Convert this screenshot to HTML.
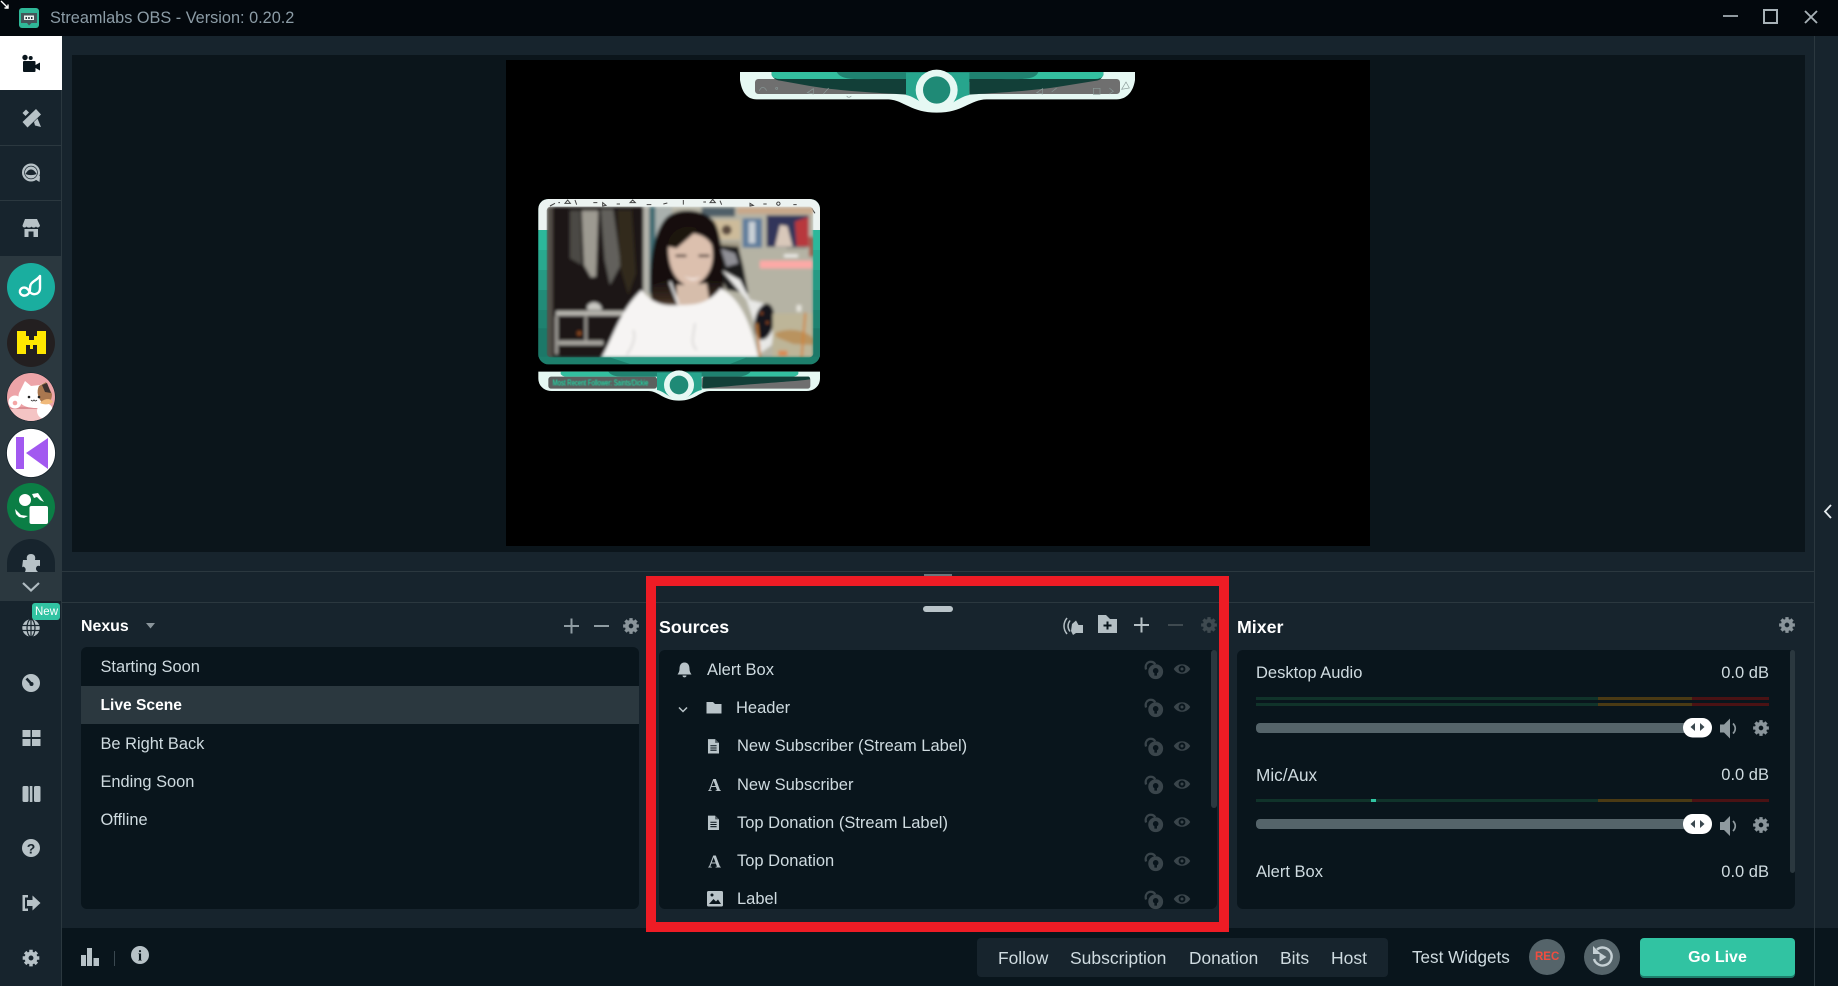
<!DOCTYPE html>
<html lang="en"><head><meta charset="utf-8"><title>Streamlabs OBS</title>
<style>
html,body{margin:0;padding:0;background:#17242d;width:1838px;height:986px;overflow:hidden}
body{position:relative;font-family:"Liberation Sans",Arial,sans-serif;color:#cfdbe0}
.b{position:absolute}
.t{position:absolute;height:20px;line-height:20px;white-space:nowrap;font-size:16.5px}
.h{font-weight:700;color:#fff}
svg.o{position:absolute;left:0;top:0}
</style></head><body>

<div class="b" style="left:0;top:0;width:1838px;height:36px;background:#03080d"></div>
<div class="b" style="left:0;top:36px;width:61px;height:950px;background:#17242d"></div>
<div class="b" style="left:61px;top:36px;width:1px;height:950px;background:#2b383f"></div>
<div class="b" style="left:0;top:36px;width:62px;height:54px;background:#fff"></div>
<div class="b" style="left:0;top:145px;width:61px;height:1px;background:#2b383f"></div>
<div class="b" style="left:0;top:200px;width:61px;height:1px;background:#2b383f"></div>
<div class="b" style="left:0;top:256px;width:61px;height:345px;background:#2b383f"></div>

<div class="b" style="left:72px;top:55px;width:1733px;height:497px;background:#0b151b"></div>
<div class="b" style="left:506px;top:60px;width:864px;height:486px;background:#000"></div>
<div class="b" style="left:1814px;top:36px;width:1px;height:950px;background:#2b383f"></div>
<div class="b" style="left:62px;top:571px;width:1752px;height:1px;background:#2b383f"></div>
<div class="b" style="left:62px;top:602px;width:1752px;height:1px;background:#2b383f"></div>
<div class="b" style="left:924px;top:574px;width:28px;height:3px;background:#6a777d"></div>
<div class="b" style="left:923px;top:606px;width:30px;height:6px;border-radius:3px;background:#b9c4c9"></div>

<div class="b" style="left:81px;top:647px;width:558px;height:262px;background:#09151c;border-radius:6px"></div>
<div class="b" style="left:81px;top:686px;width:558px;height:38px;background:#2b383f"></div>
<div class="b" style="left:659px;top:650px;width:558px;height:259px;background:#09151c;border-radius:6px"></div>
<div class="b" style="left:1237px;top:650px;width:558px;height:259px;background:#09151c;border-radius:6px"></div>
<div class="b" style="left:1211px;top:650px;width:6px;height:158px;background:#2b383f;border-radius:3px"></div>
<div class="b" style="left:1790px;top:650px;width:5px;height:223px;background:#2b383f;border-radius:3px"></div>

<div class="b" style="left:62px;top:928px;width:1776px;height:58px;background:#09151c"></div>
<div class="b" style="left:1814px;top:928px;width:1px;height:58px;background:#2b383f"></div>
<div class="b" style="left:977px;top:938px;width:411px;height:39px;background:#17242d;border-radius:4px"></div>
<div class="b" style="left:1640px;top:938px;width:155px;height:38px;background:#31c3a2;border-radius:4px;box-shadow:0 2px 0 #1d7f6c"></div>

<svg class="o" width="1838" height="986" viewBox="0 0 1838 986" xmlns="http://www.w3.org/2000/svg">
<defs>
<symbol id="g" viewBox="0 0 24 24"><circle cx="12" cy="12" r="5.6" fill="none" stroke="currentColor" stroke-width="5"/><g stroke="currentColor" stroke-width="4.4"><path d="M12 1.5V6M12 18v4.5M1.5 12H6M18 12h4.5M4.6 4.6l3.2 3.2M16.2 16.2l3.2 3.2M19.4 4.6l-3.2 3.2M7.8 16.2l-3.2 3.2"/></g></symbol>
<symbol id="lk" viewBox="0 0 24 24"><path d="M3.500 12C1 4 10 0 14 6" fill="none" stroke="#3a454b" stroke-width="2.600"/><circle cx="14.500" cy="14.500" r="8.500" fill="#3a454b"/><circle cx="14.500" cy="13.500" r="3.200" fill="#09151c"/><path d="M13 14h3v5h-3z" fill="#09151c"/></symbol>
<symbol id="ey" viewBox="0 0 24 24"><path d="M1 12C6 3.500 18 3.500 23 12C18 20.500 6 20.500 1 12Z" fill="#3a454b"/><circle cx="12" cy="12" r="4.600" fill="#09151c"/><circle cx="12" cy="12" r="2" fill="#3a454b"/></symbol>
<symbol id="dc" viewBox="0 0 12 15"><path d="M.5 0H8L12 4V15H.5Z" fill="#b9c4c9"/><path d="M8 0V4H12Z" fill="#09151c" opacity=".6"/><path d="M3 7H9.5M3 9.3H9.5M3 11.6H9.5" stroke="#09151c" stroke-width="1.1"/></symbol>
<symbol id="sp" viewBox="0 0 18 20"><path d="M0 6H4L10 0V20L4 14H0Z" fill="#8f9a9f"/><path d="M13 5C16 8 16 12 13 15" fill="none" stroke="#8f9a9f" stroke-width="1.7"/></symbol>
<clipPath id="c3"><circle cx="31" cy="397" r="24"/></clipPath>
<filter id="bl" x="-5%" y="-5%" width="110%" height="110%"><feGaussianBlur stdDeviation="4.500"/></filter>
<filter id="bs"><feGaussianBlur stdDeviation="1.200"/></filter>
<linearGradient id="hl" x1="0" y1="0" x2="0" y2="1"><stop offset="0" stop-color="#17110f"/><stop offset=".55" stop-color="#3a2a20"/><stop offset="1" stop-color="#a58f6c"/></linearGradient>
<clipPath id="vc"><rect x="50" y="50" width="800" height="452" rx="12"/></clipPath>
</defs>

<!-- window -->
<path d="M1 1L8 8M8 4.500V8H4.500" stroke="#fff" stroke-width="1.400" fill="none"/>
<rect x="19" y="8" width="20" height="20" rx="3" fill="#2fb898"/>
<path d="M21 13H37V23H31.500L29 25.500L27 23H21Z" fill="#44565a"/>
<rect x="24" y="15.500" width="10" height="4.500" fill="#eef5f3"/>
<path d="M25.500 17h1.500v2h-1.500zM28.200 17h1.500v2h-1.500zM31 17h1.500v2H31z" fill="#2b383f"/>
<path d="M1723 16H1738" stroke="#a0aab0" stroke-width="1.800"/>
<rect x="1764" y="10" width="13" height="13" fill="none" stroke="#a8b2b7" stroke-width="2"/>
<path d="M1805 11L1817 23M1817 11L1805 23" stroke="#a8b2b7" stroke-width="1.900"/>
<path d="M1831 505L1825 511.500L1831 518" fill="none" stroke="#e4ebee" stroke-width="1.800"/>

<!-- nav -->
<g fill="#09151c"><circle cx="25" cy="57.500" r="2.700"/><circle cx="30.700" cy="58" r="2"/><rect x="23" y="61" width="12.500" height="11" rx="1"/><path d="M35.500 65L40 62.500V70.500L35.500 68Z"/></g>
<g fill="#b7c2c7">
<path d="M22.500 122L36 109L41 114.500L27.500 127.500Z"/><path d="M22.500 113L26 109.500L29 112.500L25.500 116Z"/><path d="M34 122L37.500 118.500L41 127L35 125.500Z"/>
<circle cx="31" cy="172.500" r="9"/><path d="M33 178L40 176L39.500 182Z"/>
<path d="M25 219H37L40 225.500C39.500 228 36.800 228 36 226.500C35 228 32.500 228 31.500 226.500C30.500 228 27.500 228 26.500 226.500C25.500 228 22.500 228 22.500 225.500Z"/>
<path d="M24.500 229H38V237H24.500ZM28.500 231.500V237H33.500V231.500Z" fill-rule="evenodd"/>
</g>
<path d="M25.500 174C27.500 170.500 29 169.500 31 169.500C33 169.500 34.500 170.500 36.500 174C33 175.500 29 175.500 25.500 174Z" fill="#17242d"/>
<circle cx="31" cy="172.500" r="6.400" fill="none" stroke="#17242d" stroke-width=".7"/>

<!-- app icons -->
<circle cx="31" cy="287" r="24" fill="#1aae9f"/>
<path d="M40 276L40 288C40 295 32 296 29 291C27 287 22 286 20 290.500C19 295 25 298 29 293C31 290 29 287 31 284C33 281 37 280 40 276Z" fill="none" stroke="#fff" stroke-width="2.400" stroke-linejoin="round"/>
<circle cx="31" cy="343" r="24" fill="#231f20"/>
<path d="M17 331H26V336H29V340H34V336H37V331H46V354H37V345H33V349H30V345H26V354H17Z" fill="#ffe800"/>
<circle cx="31" cy="397" r="24.500" fill="#15222a"/>
<g clip-path="url(#c3)"><rect x="7" y="373" width="48" height="48" fill="#eda4a8"/><rect x="7" y="408" width="48" height="13" fill="#f4c4c4"/><path d="M7 407H55V409H7Z" fill="#dc8e93"/>
<path d="M19 393L25 381L31 386L40 385L46 382L51 396C52 404 46 409 36 408C25 408 16 404 19 393Z" fill="#fff"/>
<path d="M39 386L46 382L52 394C52 402 47 405 43 404C38 398 36 392 39 386Z" fill="#a9774f"/><path d="M42 385L47 383L51 393L45 392Z" fill="#3d3330"/>
<circle cx="15" cy="402" r="6.500" fill="#fff"/><circle cx="15" cy="403" r="2.300" fill="#f4a6a6"/>
<circle cx="45" cy="411" r="8" fill="#fff"/><path d="M40 403C44 398 51 398 53 402C49 405 44 405 40 403Z" fill="#f0b97a"/>
<circle cx="29" cy="397" r="1.300" fill="#222"/><circle cx="39" cy="397" r="1.300" fill="#222"/><path d="M31 400Q33 402 34 400Q35 402 37 400" stroke="#222" fill="none" stroke-width=".8"/></g>
<circle cx="31" cy="453" r="24.500" fill="#fff" stroke="#15222a" stroke-width=".8"/>
<rect x="16" y="437" width="8" height="32" fill="#a259f0"/><path d="M48 438L26 453L48 469Z" fill="#a259f0"/>
<circle cx="31" cy="507" r="24" fill="#0b7e45"/>
<circle cx="25" cy="500" r="6" fill="#fff"/><rect x="29.500" y="506" width="18.500" height="18" rx="2" fill="#fff"/>
<path d="M32 494L38 493L44 502L40 500L37 497L34 498Z" fill="#fff"/><path d="M15 509L21 515L28 516L24 518L19 517L16 514Z" fill="#fff"/>
<path d="M7 572V563A24 24 0 0 1 55 563V572Z" fill="#17242d"/>
<path d="M23 560H27C26 556 28 554 31 554C34 554 36 556 35 560H40V566C37 565 36 567 36 569C36 570 37 571 38 572H25C26 570 26 568 24 567C23 566 22 567 22 568Z" fill="#b7c2c7"/>
<path d="M23 583L31 590.500L39 583" fill="none" stroke="#b0bcc2" stroke-width="2.200"/>
<rect x="32" y="603" width="28" height="17" rx="3" fill="#31c3a2"/>

<!-- lower nav -->
<circle cx="31" cy="628" r="8.700" fill="#b7c2c7"/>
<g stroke="#17242d" stroke-width="1.200" fill="none"><ellipse cx="31" cy="628" rx="4" ry="8.700"/><path d="M22.500 625.500H39.500M22.500 630.500H39.500M31 619V637"/></g>
<circle cx="31" cy="683" r="9" fill="#b7c2c7"/><path d="M26.500 678.500L32 684.500" stroke="#17242d" stroke-width="2.600"/><circle cx="31.500" cy="684" r="2" fill="#17242d"/>
<g fill="#b7c2c7"><rect x="22.500" y="730" width="8" height="7"/><rect x="32" y="730" width="8.500" height="7"/><rect x="22.500" y="739" width="8" height="7"/><rect x="32" y="739" width="8.500" height="7"/>
<rect x="22.500" y="786" width="6" height="16" rx="1.500"/><rect x="29.800" y="786" width="2.600" height="16"/><rect x="34" y="786" width="6.500" height="16" rx="1.500"/>
<circle cx="31" cy="848" r="9"/>
<path d="M28 895V897.500H25V908.500H28V911H22.500V895Z"/><path d="M27 900H32.500V895.500L40.500 903L32.500 910.500V906H27Z"/></g>
<text x="31" y="853.500" text-anchor="middle" font-family="Liberation Sans" font-weight="700" font-size="14" fill="#17242d">?</text>
<use href="#g" x="21.500" y="948.500" width="19" height="19" color="#b7c2c7"/>

<!-- bottom-left -->
<g fill="#b7c2c7"><rect x="81" y="955" width="5" height="11"/><rect x="87" y="948" width="5" height="18"/><rect x="93.500" y="958" width="5.500" height="8"/></g>
<path d="M114.500 951V966" stroke="#3a4850"/>
<circle cx="140" cy="955" r="9" fill="#b7c2c7"/>
<text x="140" y="960.500" text-anchor="middle" font-family="Liberation Serif" font-weight="700" font-size="15" fill="#09151c">i</text>

<!-- nexus controls -->
<path d="M146 623H155L150.500 628.500Z" fill="#8a959b"/>
<path d="M564 626H579M571.500 618.500V633.500M594 626H609" stroke="#8f9ca2" stroke-width="2"/>
<use href="#g" x="622" y="617" width="18" height="18" color="#8a959b"/>

<!-- sources controls -->
<g color="#b4bfc4">
<path d="M1067 618C1063 623 1063 629 1067 634M1070 620.500C1067.500 624 1067.500 628 1070 631.500" fill="none" stroke="#b4bfc4" stroke-width="1.500"/>
<path d="M1072 624L1076 620.500L1078.500 625H1083V633H1076L1073 635L1071 631Z" fill="#b4bfc4"/>
<path d="M1098 615H1106L1110 619H1117V633H1098Z" fill="#b4bfc4"/>
<path d="M1107.500 621.500V629.500M1103.500 625.500H1111.500" stroke="#09151c" stroke-width="2"/>
<path d="M1134 625H1149M1141.500 617.500V632.500" stroke="#b4bfc4" stroke-width="2"/></g>
<path d="M1168 625H1183" stroke="#3f4a50" stroke-width="2"/>
<use href="#g" x="1200" y="616" width="18" height="18" color="#3f4a50"/>

<!-- rows lock/eye -->
<g>
<use href="#lk" x="1143" y="659" width="21" height="21"/><use href="#ey" x="1173" y="660" width="18" height="18"/>
<use href="#lk" x="1143" y="697" width="21" height="21"/><use href="#ey" x="1173" y="698" width="18" height="18"/>
<use href="#lk" x="1143" y="736" width="21" height="21"/><use href="#ey" x="1173" y="737" width="18" height="18"/>
<use href="#lk" x="1143" y="774" width="21" height="21"/><use href="#ey" x="1173" y="775" width="18" height="18"/>
<use href="#lk" x="1143" y="812" width="21" height="21"/><use href="#ey" x="1173" y="813" width="18" height="18"/>
<use href="#lk" x="1143" y="851" width="21" height="21"/><use href="#ey" x="1173" y="852" width="18" height="18"/>
<use href="#lk" x="1143" y="889" width="21" height="21"/><use href="#ey" x="1173" y="890" width="18" height="18"/>
</g>
<!-- row icons -->
<path d="M684.500 662.500C688.500 662.500 689.500 666 689.500 669C689.500 671.500 690.500 673 691.500 674.500H677.500C678.500 673 679.500 671.500 679.500 669C679.500 666 680.500 662.500 684.500 662.500Z M682.500 675.500H686.500C686.500 678 682.500 678 682.500 675.500Z" fill="#b9c4c9"/>
<path d="M679 707.500L683 711.500L687 707.500" fill="none" stroke="#b9c4c9" stroke-width="1.500"/>
<path d="M706.500 702H713L715 704H721.500V713.500H706.500Z" fill="#b9c4c9"/>
<use href="#dc" x="707.500" y="739" width="11.500" height="14.500"/>
<use href="#dc" x="707.500" y="815.500" width="11.500" height="14.500"/>
<text x="714.500" y="791" text-anchor="middle" font-family="Liberation Serif" font-weight="700" font-size="18" fill="#b9c4c9">A</text>
<text x="714.500" y="867.500" text-anchor="middle" font-family="Liberation Serif" font-weight="700" font-size="18" fill="#b9c4c9">A</text>
<rect x="707" y="891" width="16" height="15.500" rx="1.500" fill="#b9c4c9"/><path d="M709 904L713.500 899L716 901.500L718 899.500L721 904Z" fill="#09151c"/><circle cx="712" cy="895" r="1.500" fill="#09151c"/>

<!-- mixer -->
<use href="#g" x="1778" y="616" width="18" height="18" color="#8a959b"/>
<g>
<rect x="1256" y="697" width="342" height="3" fill="#10332a"/><rect x="1598" y="697" width="94" height="3" fill="#4a3a14"/><rect x="1692" y="697" width="77" height="3" fill="#4a1214"/>
<rect x="1256" y="703" width="342" height="3" fill="#10332a"/><rect x="1598" y="703" width="94" height="3" fill="#4a3a14"/><rect x="1692" y="703" width="77" height="3" fill="#4a1214"/>
<rect x="1256" y="799" width="342" height="3" fill="#10332a"/><rect x="1598" y="799" width="94" height="3" fill="#4a3a14"/><rect x="1692" y="799" width="77" height="3" fill="#4a1214"/>
<rect x="1371" y="799" width="5" height="3" fill="#31c3a2"/>
<rect x="1256" y="723" width="440" height="10" rx="4" fill="#55646a"/>
<rect x="1256" y="819" width="440" height="10" rx="4" fill="#55646a"/>
<rect x="1683" y="718" width="29" height="19.500" rx="9.700" fill="#fff"/>
<rect x="1683" y="814" width="29" height="20" rx="9.700" fill="#fff"/>
<path d="M1695 723V731L1690.500 727ZM1700 723V731L1704.500 727Z" fill="#3a474e"/>
<path d="M1695 820V828L1690.500 824ZM1700 820V828L1704.500 824Z" fill="#3a474e"/>
<use href="#sp" x="1720" y="718.500" width="18" height="20"/>
<use href="#sp" x="1720" y="816" width="18" height="20"/>
<use href="#g" x="1752" y="719" width="18" height="18" color="#8a959b"/>
<use href="#g" x="1752" y="816" width="18" height="18" color="#8a959b"/>
</g>

<!-- bottom right -->
<circle cx="1547" cy="957" r="18" fill="#55646a"/>
<circle cx="1602" cy="957" r="18" fill="#55646a"/>
<path d="M1597 949.500A9 9 0 1 1 1594 959" fill="none" stroke="#c5d0d4" stroke-width="2.400"/>
<path d="M1593 946V954H1601Z" fill="#c5d0d4"/><path d="M1599.500 952.500L1606.500 957L1599.500 961.500Z" fill="#c5d0d4"/>

<!-- top banner -->
<svg x="730" y="60" width="410" height="60" viewBox="0 0 1230 180">
<path d="M30 36H1215V60C1210 95 1190 118 1160 118H770C720 118 700 158 620 158C540 158 520 118 470 118H80C50 118 35 95 30 60Z" fill="#e6f8f3"/>
<rect x="75" y="57" width="453" height="45" rx="10" fill="#6f6f6f"/>
<rect x="718" y="57" width="452" height="45" rx="10" fill="#6f6f6f"/>
<path d="M125 36H1120V45C1115 55 1110 60 1100 62L1000 78C900 95 760 100 718 104L718 66H528V104C480 100 340 95 240 78L150 62C135 60 128 52 125 45Z" fill="#123f38"/>
<path d="M125 36H1120V46Q1115 57 1095 57H150Q130 57 125 46Z" fill="#33bf9f"/>
<path d="M320 36H925C915 62 870 57 800 57H445C375 57 335 62 320 36Z" fill="#1f8270"/>
<path d="M528 38H718V105C700 108 680 120 650 140H590C565 120 545 108 528 105Z" fill="#27a58d"/>
<ellipse cx="620" cy="90" rx="63" ry="61" fill="#e6f8f3"/>
<circle cx="620" cy="90" r="41" fill="#1f8a76"/>
<g fill="none" stroke="#8a9a98" stroke-width="2"><path d="M88 92Q98 72 110 92M232 98L250 86V102ZM280 102L296 84M350 108Q356 116 364 108M920 98L938 86V102ZM965 96L980 84M1090 85H1110V103H1090ZM1138 84L1150 94L1138 102M1175 88L1188 66L1198 84Z"/><circle cx="140" cy="85" r="3"/></g>
</svg>

<!-- webcam -->
<svg x="530" y="190" width="300" height="220" viewBox="0 0 900 660">
<rect x="25" y="27" width="845" height="496" rx="30" fill="#1d7f6c"/>
<path d="M25 120V57A30 30 0 0 1 55 27H840A30 30 0 0 1 870 57V120Z" fill="#ecf3f1"/>
<rect x="25" y="120" width="845" height="60" fill="#2cb89b"/><rect x="25" y="180" width="845" height="60" fill="#29a98f"/><rect x="25" y="240" width="845" height="60" fill="#269a84"/><rect x="25" y="300" width="845" height="60" fill="#228c78"/><rect x="25" y="360" width="845" height="55" fill="#1f8270"/><rect x="25" y="415" width="845" height="85" fill="#1c7868"/>
<path d="M60 48L75 40M85 38h5M105 40l8-10 8 10zM135 30l5 14M190 38h12M218 38l10 8-10 2zM260 42h10M300 38l8-8 8 8zM350 44h14M400 42l12-3M460 30v14M520 36h8M540 38l8-10 8 10zM570 32l5 12M660 40l10 6-10 2zM700 42h10M745 36a5 5 0 1 0 .1 0M790 44h10M845 55l10 15" stroke="#444" stroke-width="3" fill="none"/>
<g clip-path="url(#vc)"><g filter="url(#bl)">
<rect x="50" y="50" width="800" height="452" fill="#b5b3a4"/>
<rect x="50" y="50" width="292" height="452" fill="#1a1918"/>
<rect x="50" y="50" width="18" height="452" fill="#55504a"/>
<path d="M120 62H150L155 225L120 205Z" fill="#4c4a45"/>
<path d="M155 62H205L198 260L183 262L162 225Z" fill="#9d9a91"/>
<path d="M212 58H250L272 225L240 285L224 210Z" fill="#62605b"/>
<path d="M262 60H305L318 250L295 315L270 230Z" fill="#33291f"/>
<path d="M172 348C182 332 212 332 216 360H172Z" fill="#c9c8c3"/>
<rect x="78" y="363" width="205" height="14" fill="#b9b7b1"/><rect x="75" y="378" width="9" height="115" fill="#a09e98"/><rect x="164" y="378" width="7" height="75" fill="#a09e98"/><rect x="85" y="452" width="135" height="13" fill="#aaa8a2"/>
<circle cx="148" cy="430" r="7" fill="#8c4a1c"/>
<rect x="340" y="50" width="18" height="260" fill="#b5b4ac"/><rect x="358" y="50" width="18" height="260" fill="#3c6a72"/><rect x="376" y="50" width="50" height="220" fill="#a9b0ad"/>
<rect x="515" y="52" width="100" height="28" fill="#4f5f68"/><rect x="622" y="52" width="228" height="20" fill="#c8a88a"/>
<rect x="545" y="90" width="85" height="58" fill="#cdbb9a"/><circle cx="590" cy="120" r="15" fill="#5a4a3d"/><rect x="560" y="155" width="70" height="30" fill="#a69f8a"/>
<rect x="638" y="85" width="58" height="88" fill="#5f7d9c"/><rect x="656" y="95" width="20" height="65" fill="#c9d0d6"/>
<rect x="710" y="76" width="126" height="95" fill="#30345a"/><path d="M795 95L836 80V170H800Z" fill="#b8373d"/><path d="M735 170L750 105L772 108L788 170Z" fill="#d9c8ba"/>
<rect x="837" y="140" width="13" height="60" fill="#a55a48"/>
<rect x="690" y="212" width="160" height="23" fill="#fda9a6"/>
<rect x="762" y="193" width="42" height="9" fill="#efeeea"/><rect x="770" y="172" width="60" height="5" fill="#8f8f86"/>
<path d="M560 165L625 170L640 230L655 310L590 300L565 240Z" fill="#1b1a1a"/><path d="M572 175L615 190L625 220L590 230Z" fill="#8f8f95"/>
<path d="M575 240L630 270L660 330L700 340L735 395L725 465L690 490L680 420L650 330Z" fill="#e8e8e6"/>
<ellipse cx="703" cy="395" rx="29" ry="55" fill="#17171a" transform="rotate(10 703 395)"/><circle cx="695" cy="370" r="3" fill="#d06a2a"/><circle cx="712" cy="398" r="3" fill="#d06a2a"/>
<path d="M728 370H850V502H728Z" fill="#bdb598"/><path d="M735 430C770 412 825 418 850 445V465L790 462L740 442Z" fill="#b9935f"/><path d="M745 482H772V498H745Z" fill="#d9884f"/>
<path d="M680 400L690 502M826 368L815 502" stroke="#d08438" stroke-width="6" fill="none"/>
<path d="M800 345h14v20h-14z" fill="#e6e4dc"/>
<path d="M362 320C355 230 368 125 410 82C450 48 530 58 556 100C582 150 575 250 585 325L540 350H420Z" fill="#15100e"/>
<path d="M368 285L410 270L440 340L402 378L362 340Z" fill="url(#hl)"/>
<path d="M530 270L575 275L590 335L555 372L520 350Z" fill="url(#hl)"/>
<path d="M415 165C435 118 520 118 545 165C556 215 540 265 492 288C445 292 412 240 415 165Z" fill="#dcc0ae"/>
<path d="M415 170C408 130 465 92 505 118L440 175Z" fill="#1e130f"/>
<rect x="436" y="194" width="34" height="7" rx="3.500" fill="#3b2a24"/><rect x="505" y="194" width="34" height="7" rx="3.500" fill="#3b2a24"/>
<path d="M462 258Q490 272 512 258Q490 284 462 258Z" fill="#f3e9e4"/>
<path d="M440 285L530 280L540 345H440Z" fill="#d6bdab"/>
<path d="M215 502C250 440 270 360 335 300C365 340 400 350 450 345C500 345 535 340 572 295C640 330 665 420 685 502Z" fill="#f6f4f3"/>
<path d="M495 400C490 440 480 460 500 480M310 420C320 450 300 480 290 495" stroke="#cfcdcc" stroke-width="4" fill="none"/>
<path d="M420 275L445 342" stroke="#eee" stroke-width="6"/>
</g></g>
<path d="M240 502H650L600 522H300Z" fill="#2b9b85"/>
<!-- lower banner -->
<path d="M25 545H870V565C870 590 850 603 830 603H540C510 603 495 632 447 632C400 632 385 603 355 603H65C45 603 25 590 25 565Z" fill="#e6f8f3"/>
<rect x="55" y="560" width="326" height="36" rx="8" fill="#5c5f5e"/><rect x="515" y="560" width="326" height="36" rx="8" fill="#6f6f6f"/>
<path d="M92 545H805V552Q800 560 785 560H110Q97 560 92 552Z" fill="#33bf9f"/><path d="M235 545H662Q650 560 620 560H275Q245 560 235 545Z" fill="#1f8270"/>
<path d="M520 560H835Q840 560 840 568C800 574 680 580 517 596Z" fill="#123f38"/>
<path d="M381 548H515V600C500 602 490 612 470 622H424C405 612 395 602 381 600Z" fill="#27a58d"/>
<ellipse cx="447" cy="585" rx="45" ry="44" fill="#e6f8f3"/><circle cx="447" cy="585" r="28" fill="#1f8a76"/>
<text x="68" y="586" font-family="Liberation Sans" font-size="24" fill="#12f0b2" textLength="287" lengthAdjust="spacingAndGlyphs" filter="url(#bs)">Most Recent Follower: Saints/Dickie</text>
</svg>

<!-- red highlight -->
<rect x="651" y="581" width="573" height="346" fill="none" stroke="#ee1c25" stroke-width="10"/>
</svg>

<div class="t" style="left:50px;top:8px;font-size:16.300px;color:#8c9ca6">Streamlabs OBS - Version: 0.20.2</div>
<div class="t h" style="left:35px;top:602px;width:24px;font-size:11.500px;font-weight:400">New</div>

<div class="t h" style="left:81px;top:617px;font-size:15.900px">Nexus</div>
<div class="t" style="left:100.500px;top:657px;font-size:16.400px">Starting Soon</div>
<div class="t h" style="left:100.500px;top:696px;font-size:15.600px">Live Scene</div>
<div class="t" style="left:100.500px;top:734px;font-size:16.400px">Be Right Back</div>
<div class="t" style="left:100.500px;top:772px;font-size:16.400px">Ending Soon</div>
<div class="t" style="left:100.500px;top:810px;font-size:16.400px">Offline</div>

<div class="t h" style="left:659px;top:617px;font-size:17.800px">Sources</div>
<div class="t" style="left:707px;top:660px">Alert Box</div>
<div class="t" style="left:736px;top:698px">Header</div>
<div class="t" style="left:737px;top:736px">New Subscriber (Stream Label)</div>
<div class="t" style="left:737px;top:775px">New Subscriber</div>
<div class="t" style="left:737px;top:813px">Top Donation (Stream Label)</div>
<div class="t" style="left:737px;top:851px">Top Donation</div>
<div class="t" style="left:737px;top:889px">Label</div>

<div class="t h" style="left:1237px;top:617px;font-size:17.800px">Mixer</div>
<div class="t" style="left:1256px;top:663px">Desktop Audio</div>
<div class="t" style="right:69px;top:663px">0.0 dB</div>
<div class="t" style="left:1256px;top:765px;font-size:17.200px">Mic/Aux</div>
<div class="t" style="right:69px;top:765px">0.0 dB</div>
<div class="t" style="left:1256px;top:862px">Alert Box</div>
<div class="t" style="right:69px;top:862px">0.0 dB</div>

<div class="t" style="left:998px;top:948px;font-size:17.400px">Follow</div>
<div class="t" style="left:1070px;top:948px;font-size:17.500px">Subscription</div>
<div class="t" style="left:1189px;top:948px;font-size:17.300px">Donation</div>
<div class="t" style="left:1280px;top:948px;font-size:17.500px">Bits</div>
<div class="t" style="left:1331px;top:948px;font-size:17.500px">Host</div>
<div class="t" style="left:1412px;top:948px;font-size:17.100px">Test Widgets</div>
<div class="t" style="left:1535px;top:947px;width:24px;font-size:11.500px;font-weight:700;color:#f04d3f;text-align:center">REC</div>
<div class="t h" style="left:1640px;top:948px;width:155px;text-align:center;font-size:16px">Go Live</div>
</body></html>
